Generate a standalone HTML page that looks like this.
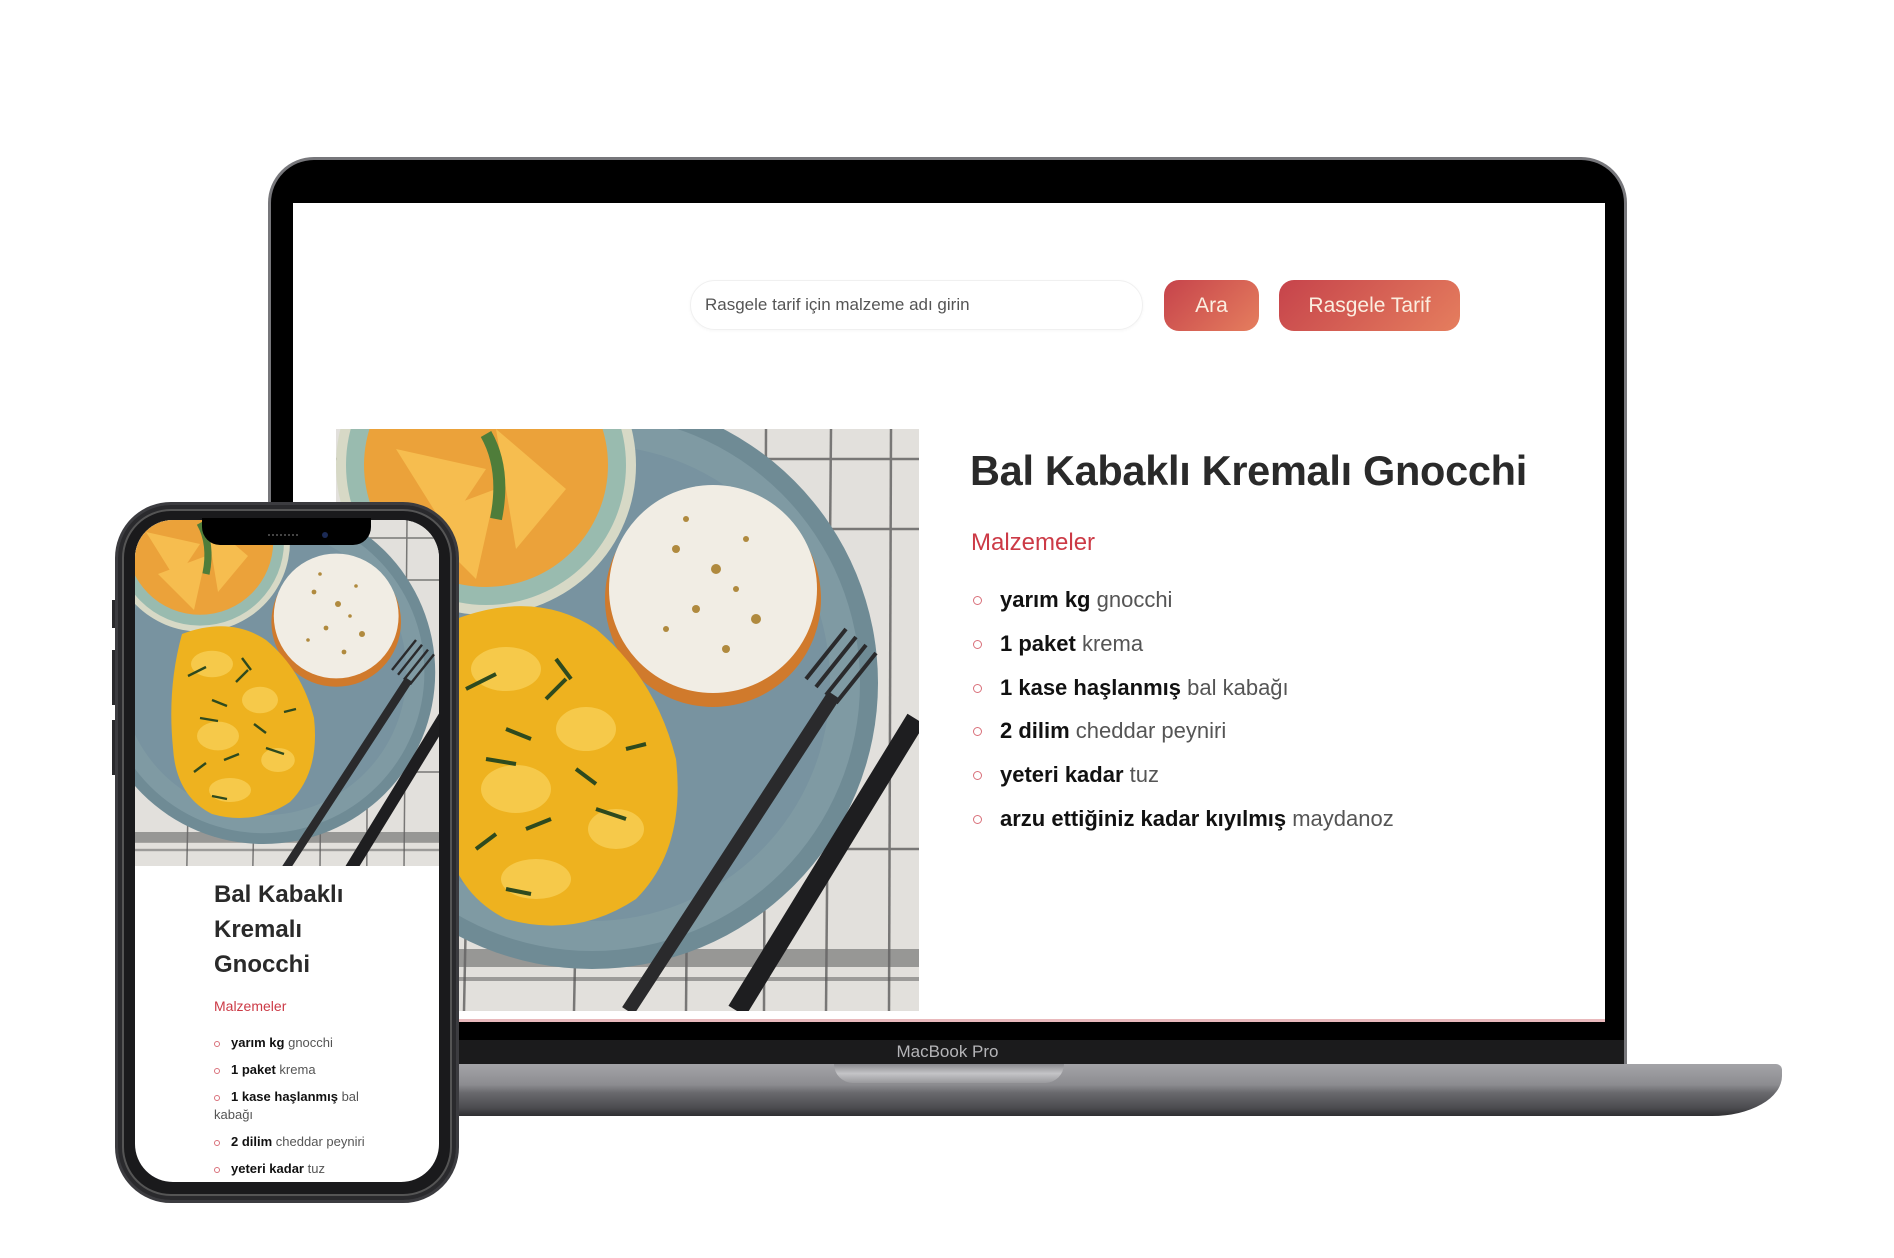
<!DOCTYPE html>
<html><head><meta charset="utf-8">
<style>
*{margin:0;padding:0;box-sizing:border-box}
body{width:1894px;height:1258px;background:#fff;position:relative;overflow:hidden;font-family:"Liberation Sans",sans-serif}
.abs{position:absolute}
.lid{left:268px;top:157px;width:1359px;height:907px;background:#000;border-radius:46px 46px 0 0;border:3px solid #77777b;border-bottom:none}
.screen{left:293px;top:203px;width:1312px;height:819px;background:#fff;overflow:hidden}
.band{left:271px;top:1040px;width:1353px;height:24px;background:#1b1b1c;color:#b5b5b8;font-size:17px;text-align:center;line-height:24px}
.base{left:220px;top:1064px;width:1562px;height:52px;border-radius:0 6px 70px 0/0 6px 40px 0;background:linear-gradient(#a4a4a8 0%,#8c8c90 40%,#6a6a6e 55%,#4a4a4e 85%,#2e2e31 100%)}
.notch{left:834px;top:1064px;width:230px;height:19px;border-radius:0 0 20px 20px;background:linear-gradient(#8a8a8e,#c4c4c7 50%,#9a9a9d)}
.search{left:397px;top:77px;width:453px;height:50px;border:1px solid #f0f0f0;border-radius:25px;font-size:17px;color:#555;line-height:48px;padding-left:14px;box-shadow:0 1px 3px rgba(0,0,0,.04)}
.btn{top:77px;height:51px;border-radius:15px;background:linear-gradient(135deg,#c6434b,#e57e5e);color:#fbeee0;font-size:21px;text-align:center;line-height:51px}
h1{position:absolute;left:677px;top:244px;font-size:41.5px;font-weight:bold;color:#2a2a2a;white-space:nowrap;letter-spacing:-.3px}
.mal{position:absolute;left:678px;top:326px;font-size:24px;color:#cc3a46}
ul{list-style:none;position:absolute;left:680px;top:384px}
li{height:43.8px;font-size:22px;color:#555;position:relative;padding-left:27px;white-space:nowrap;line-height:26px}
li b{color:#111}
li:before{content:"";position:absolute;left:0;top:9px;width:7px;height:7px;border:1.3px solid #d9707a;border-radius:50%}
.phone{left:115px;top:502px;width:344px;height:701px;border-radius:56px;background:#1a1a1c;border:3px solid #3c3c40;box-shadow:inset 0 0 0 4px #2a2a2d, inset 0 0 0 6px #555}
.pscreen{left:135px;top:520px;width:304px;height:662px;border-radius:38px;background:#fff;overflow:hidden}
.pnotch{left:202px;top:518px;width:169px;height:27px;background:#000;border-radius:0 0 18px 18px}
.ph1{position:absolute;left:79px;top:357px;font-size:24px;font-weight:bold;color:#2a2a2a;line-height:35px}
.pmal{position:absolute;left:79px;top:478px;font-size:14px;color:#cc3a46}
.pul{position:absolute;left:79px;top:514px;list-style:none;width:160px}
.pul li{height:auto;font-size:13px;line-height:18px;padding-left:0;margin-bottom:9px;white-space:normal;color:#555;text-indent:17px}
.pul li:before{width:4px;height:4px;top:7px;border-width:1px;left:0}
.pbtn{position:absolute;background:#2a2a2d;width:4px;left:112px}
</style></head><body>
<svg width="0" height="0" style="position:absolute">
<defs>
<symbol id="food" viewBox="0 0 583 582">
<rect width="583" height="582" fill="#e2e0dc"/>
<g stroke="#333" stroke-width="2.5" opacity=".6">
<line x1="355" y1="0" x2="350" y2="582"/><line x1="430" y1="0" x2="428" y2="582"/><line x1="495" y1="0" x2="490" y2="582"/><line x1="555" y1="0" x2="553" y2="582"/><line x1="130" y1="480" x2="128" y2="582"/><line x1="240" y1="480" x2="238" y2="582"/>
<line x1="0" y1="30" x2="583" y2="30"/><line x1="0" y1="100" x2="583" y2="100"/><line x1="0" y1="420" x2="583" y2="420"/>
</g>
<rect x="0" y="520" width="583" height="18" fill="#666" opacity=".6"/>
<rect x="0" y="548" width="583" height="4" fill="#555" opacity=".5"/>
<circle cx="256" cy="254" r="286" fill="#6f8b95"/>
<circle cx="256" cy="254" r="268" fill="#7f9aa3"/>
<circle cx="256" cy="254" r="238" fill="#7893a0"/>
<circle cx="150" cy="36" r="150" fill="#d7d9c6"/>
<circle cx="150" cy="36" r="140" fill="#6fa7a0" opacity=".6"/>
<circle cx="150" cy="36" r="122" fill="#eba23a"/>
<g fill="#f6bd4f"><path d="M60 20 L150 40 L110 100Z"/><path d="M160 0 L230 60 L180 120Z"/><path d="M80 90 L160 60 L140 150Z"/></g>
<path d="M150 5 Q170 40 160 90" stroke="#4f7d3a" stroke-width="12" fill="none"/>
<circle cx="377" cy="170" r="108" fill="#d07a2c"/>
<circle cx="377" cy="160" r="104" fill="#f1ede4"/>
<g fill="#b08a3e"><circle cx="340" cy="120" r="4"/><circle cx="380" cy="140" r="5"/><circle cx="410" cy="110" r="3"/><circle cx="360" cy="180" r="4"/><circle cx="420" cy="190" r="5"/><circle cx="330" cy="200" r="3"/><circle cx="390" cy="220" r="4"/><circle cx="400" cy="160" r="3"/><circle cx="350" cy="90" r="3"/></g>
<path d="M120 190 Q200 160 260 200 Q320 250 340 330 Q350 420 300 470 Q240 510 170 490 Q110 460 105 380 Q95 280 120 190Z" fill="#eeb21f"/>
<g fill="#f6c94a"><ellipse cx="170" cy="240" rx="35" ry="22"/><ellipse cx="250" cy="300" rx="30" ry="22"/><ellipse cx="180" cy="360" rx="35" ry="24"/><ellipse cx="280" cy="400" rx="28" ry="20"/><ellipse cx="200" cy="450" rx="35" ry="20"/></g>
<g stroke="#2e4a1e" stroke-width="4" fill="none"><path d="M130 260 l30 -15 M170 300 l25 10 M210 270 l20 -20 M150 330 l30 5 M240 340 l20 15 M190 400 l25 -10 M260 380 l30 10 M140 420 l20 -15 M220 230 l15 20 M290 320 l20 -5 M170 460 l25 5"/></g>
<path d="M498 266 L292 582" stroke="#2a2a2c" stroke-width="14"/>
<g stroke="#2a2a2c" stroke-width="4"><line x1="470" y1="250" x2="510" y2="200"/><line x1="480" y1="258" x2="520" y2="208"/><line x1="490" y1="266" x2="530" y2="216"/><line x1="500" y1="274" x2="540" y2="224"/></g>
<path d="M580 290 L401 582" stroke="#1e1e20" stroke-width="20"/>
</symbol>
</defs></svg>

<div class="abs lid"></div>
<div class="abs screen">
  <div class="abs search">Rasgele tarif için malzeme adı girin</div>
  <div class="abs btn" style="left:871px;width:95px">Ara</div>
  <div class="abs btn" style="left:986px;width:181px">Rasgele Tarif</div>
  <svg class="abs" style="left:43px;top:226px" width="583" height="582"><use href="#food"/></svg>
  <h1>Bal Kabaklı Kremalı Gnocchi</h1>
  <div class="mal">Malzemeler</div>
  <ul>
    <li><b>yarım kg</b> gnocchi</li>
    <li><b>1 paket</b> krema</li>
    <li><b>1 kase haşlanmış</b> bal kabağı</li>
    <li><b>2 dilim</b> cheddar peyniri</li>
    <li><b>yeteri kadar</b> tuz</li>
    <li><b>arzu ettiğiniz kadar kıyılmış</b> maydanoz</li>
  </ul>
  <div class="abs" style="left:0;top:816px;width:1312px;height:3px;background:#e9b9bc"></div>
</div>
<div class="abs band">MacBook Pro</div>
<div class="abs base"></div>
<div class="abs notch"></div>

<div class="pbtn abs" style="top:600px;height:28px"></div>
<div class="pbtn abs" style="top:650px;height:55px"></div>
<div class="pbtn abs" style="top:720px;height:55px"></div>
<div class="abs phone"></div>
<div class="abs pscreen">
  <svg class="abs" style="left:0;top:0" width="304" height="346" viewBox="0 0 304 346"><g transform="translate(-25,0) scale(0.6)"><use href="#food" width="583" height="582"/></g></svg>
  <div class="ph1">Bal Kabaklı<br>Kremalı<br>Gnocchi</div>
  <div class="pmal">Malzemeler</div>
  <ul class="pul">
    <li><b>yarım kg</b> gnocchi</li>
    <li><b>1 paket</b> krema</li>
    <li><b>1 kase haşlanmış</b> bal kabağı</li>
    <li><b>2 dilim</b> cheddar peyniri</li>
    <li><b>yeteri kadar</b> tuz</li>
  </ul>
</div>
<div class="abs pnotch"></div>
<div class="abs" style="left:268px;top:534px;width:30px;height:3px;border-top:2px dotted #444"></div>
<div class="abs" style="left:322px;top:532px;width:6px;height:6px;border-radius:50%;background:#1b2a55"></div>
</body></html>
